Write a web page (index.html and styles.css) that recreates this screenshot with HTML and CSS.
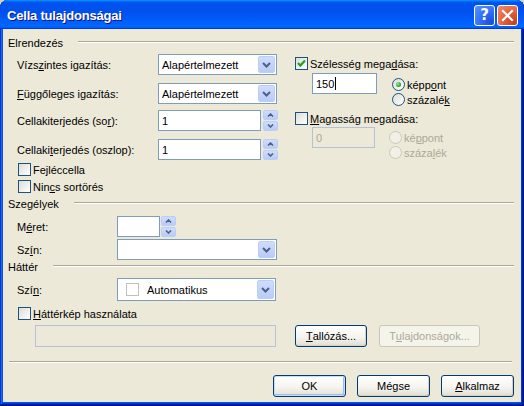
FILE: index.html
```html
<!DOCTYPE html>
<html lang="hu">
<head>
<meta charset="utf-8">
<title>Cella tulajdonságai</title>
<link rel="stylesheet" href="styles.css">
</head>
<body>
<div class="window">
  <div class="titlebar">
    <span class="title">Cella tulajdonságai</span>
    <div class="tbtns">
      <span class="tbtn help">?</span>
      <span class="tbtn close"><svg width="13" height="13" viewBox="0 0 13 13"><path d="M2 2 L11 11 M11 2 L2 11" stroke="#fff" stroke-width="2.2" stroke-linecap="square" fill="none"/></svg></span>
    </div>
  </div>
  <div class="client">
    <div class="ghead"><span>Elrendezés</span><i class="rule"></i></div>
    <div class="layout">
      <div class="col-left">
        <div class="frow">
          <span class="lbl">Vízs<u>z</u>intes igazítás:</span>
          <div class="combo w120"><span class="val">Alapértelmezett</span><span class="drop"><svg width="9" height="6" viewBox="0 0 9 6"><path d="M1 1 L4.5 4.5 L8 1" stroke="#4D6185" stroke-width="2" fill="none"/></svg></span></div>
        </div>
        <div class="frow mt8">
          <span class="lbl"><u>F</u>üggőleges igazítás:</span>
          <div class="combo w120"><span class="val">Alapértelmezett</span><span class="drop"><svg width="9" height="6" viewBox="0 0 9 6"><path d="M1 1 L4.5 4.5 L8 1" stroke="#4D6185" stroke-width="2" fill="none"/></svg></span></div>
        </div>
        <div class="frow mt6">
          <span class="lbl">Cellakiterjedés (so<u>r</u>):</span>
          <div class="edit w103">1</div>
          <div class="spin"><span class="sb"><svg width="7" height="4" viewBox="0 0 7 4"><path d="M1 3.5 L3.5 1 L6 3.5" stroke="#4D6185" stroke-width="1.6" fill="none"/></svg></span><span class="sb"><svg width="7" height="4" viewBox="0 0 7 4"><path d="M1 0.5 L3.5 3 L6 0.5" stroke="#4D6185" stroke-width="1.6" fill="none"/></svg></span></div>
        </div>
        <div class="frow mt8">
          <span class="lbl">Cellaki<u>t</u>erjedés (oszlop):</span>
          <div class="edit w103">1</div>
          <div class="spin"><span class="sb"><svg width="7" height="4" viewBox="0 0 7 4"><path d="M1 3.5 L3.5 1 L6 3.5" stroke="#4D6185" stroke-width="1.6" fill="none"/></svg></span><span class="sb"><svg width="7" height="4" viewBox="0 0 7 4"><path d="M1 0.5 L3.5 3 L6 0.5" stroke="#4D6185" stroke-width="1.6" fill="none"/></svg></span></div>
        </div>
        <div class="cbrow mt2 ind1"><span class="cb"></span><span class="cbl">Fe<u>j</u>léccella</span></div>
        <div class="cbrow mt2 ind1"><span class="cb"></span><span class="cbl">Nin<u>c</u>s sortörés</span></div>
      </div>
      <div class="col-right">
        <div class="cbrow mt2"><span class="cb checked"><svg width="11" height="11" viewBox="0 0 11 11"><path d="M2 5 L4.3 7.6 L9 2.6" stroke="#21A121" stroke-width="2.2" fill="none"/></svg></span><span class="cbl">Szélesség mega<u>d</u>ása:</span></div>
        <div class="subrow mt2">
          <div class="edit w65">150<span class="caret"></span></div>
          <div class="radios rg1">
            <div class="rrow"><span class="radio on"><span class="dot"></span></span><span class="rl">képp<u>o</u>nt</span></div>
            <div class="rrow"><span class="radio"></span><span class="rl">százalé<u>k</u></span></div>
          </div>
        </div>
        <div class="cbrow mt4"><span class="cb"></span><span class="cbl"><u>M</u>agasság megadása:</span></div>
        <div class="subrow mt1">
          <div class="edit w63 dis">0</div>
          <div class="radios rg2">
            <div class="rrow"><span class="radio dis"></span><span class="rl dis">ké<u>p</u>pont</span></div>
            <div class="rrow"><span class="radio dis"></span><span class="rl dis">száza<u>l</u>ék</span></div>
          </div>
        </div>
      </div>
    </div>

    <div class="ghead mt3"><span>Szegélyek</span><i class="rule"></i></div>
    <div class="section">
      <div class="frow mt5">
        <span class="lbl l100">M<u>é</u>ret:</span>
        <div class="edit w43"></div>
        <div class="spin ml1"><span class="sb"><svg width="7" height="4" viewBox="0 0 7 4"><path d="M1 3.5 L3.5 1 L6 3.5" stroke="#4D6185" stroke-width="1.6" fill="none"/></svg></span><span class="sb"><svg width="7" height="4" viewBox="0 0 7 4"><path d="M1 0.5 L3.5 3 L6 0.5" stroke="#4D6185" stroke-width="1.6" fill="none"/></svg></span></div>
      </div>
      <div class="frow mt2">
        <span class="lbl l100">Sz<u>í</u>n:</span>
        <div class="combo w160"><span class="val"></span><span class="drop"><svg width="9" height="6" viewBox="0 0 9 6"><path d="M1 1 L4.5 4.5 L8 1" stroke="#4D6185" stroke-width="2" fill="none"/></svg></span></div>
      </div>
    </div>

    <div class="ghead"><span>Háttér</span><i class="rule"></i></div>
    <div class="section">
      <div class="frow h23 mt4">
        <span class="lbl l100">Szí<u>n</u>:</span>
        <div class="combo w159 h23"><span class="swatch"></span><span class="val">Automatikus</span><span class="drop tall"><svg width="9" height="6" viewBox="0 0 9 6"><path d="M1 1 L4.5 4.5 L8 1" stroke="#4D6185" stroke-width="2" fill="none"/></svg></span></div>
      </div>
      <div class="cbrow mt5 ind1"><span class="cb"></span><span class="cbl"><u>H</u>áttérkép használata</span></div>
      <div class="pathrow mt4">
        <div class="edit dis path"></div>
        <span class="btn browse"><u>T</u>allózás...</span>
        <span class="btn disabled props">T<u>u</u>lajdonságok...</span>
      </div>
    </div>

    <div class="sep"></div>
    <div class="btnrow">
      <span class="btn default">OK</span>
      <span class="btn">Mégse</span>
      <span class="btn"><u>A</u>lkalmaz</span>
    </div>
  </div>
</div>
</body>
</html>
```
FILE: styles.css
```css
* { box-sizing: border-box; }
html, body { margin: 0; padding: 0; }
body {
  width: 524px;
  height: 406px;
  overflow: hidden;
  background: #d9d3bd;
  font-family: "Liberation Sans", Arial, sans-serif;
  font-size: 11px;
  color: #000;
}
u { text-decoration: underline; text-underline-offset: 1px; }

.window {
  width: 524px;
  height: 406px;
  display: flex;
  flex-direction: column;
  background: #0055e5;
  border-radius: 8px 8px 0 0;
  box-shadow: inset -1px -1px #00138c, inset 1px 1px #0831d9, inset -2px -2px #001ea0, inset 2px 2px #166aee, inset -3px -3px #003bda, inset 3px 3px #0855dd;
}

.titlebar {
  height: 29px;
  flex: none;
  display: flex;
  align-items: flex-start;
  justify-content: space-between;
  padding: 0 6px 0 7px;
  border-radius: 8px 8px 0 0;
  background: linear-gradient(180deg, #0997ff, #0053ee 8%, #0050ee 40%, #0066ff 88%, #0066ff 93%, #005bff 95%, #003dd7 96%, #003dd7);
}
.title {
  margin-top: 8px;
  color: #fff;
  font-weight: bold;
  font-size: 13px;
  letter-spacing: -0.2px;
  text-shadow: 1px 1px #0f1089;
}
.tbtns { display: flex; gap: 2px; margin-top: 5px; }
.tbtn {
  width: 21px;
  height: 21px;
  border: 1px solid #fff;
  border-radius: 3px;
  display: flex;
  align-items: center;
  justify-content: center;
}
.help {
  background: radial-gradient(circle at 85% 85%, #1a4fd8 0%, #2f6ef4 45%, #5a95ff 100%);
  color: #fff;
  font-family: "DejaVu Sans", sans-serif;
  font-weight: bold;
  font-size: 15px;
  line-height: 1;
}
.close {
  background: radial-gradient(circle at 85% 85%, #c2401f 0%, #e2643f 50%, #f08d6c 100%);
}

.client {
  flex: 1;
  margin: 0 3px 4px 3px;
  background: #ece9d8;
  display: flex;
  flex-direction: column;
}

.ghead {
  display: flex;
  align-items: center;
  height: 14px;
  padding: 0 7px 0 5px;
  flex: none;
}
.client > .ghead:first-child { margin-top: 7px; }
.rule {
  flex: 1;
  height: 2px;
  margin-left: 15px;
  margin-bottom: 3px;
  border-top: 1px solid #aca899;
  border-bottom: 1px solid #fff;
}

.layout {
  display: flex;
  gap: 18px;
  padding-left: 14px;
  margin-top: 4px;
  flex: none;
}
.col-left { width: 260px; display: flex; flex-direction: column; }
.col-right { display: flex; flex-direction: column; }
.section { padding-left: 14px; display: flex; flex-direction: column; flex: none; }

.frow { display: flex; align-items: center; height: 21px; flex: none; }
.frow.h23 { height: 23px; }
.lbl { width: 141px; flex: none; }
.lbl.l100 { width: 100px; }

.mt1 { margin-top: 1px; }
.mt2 { margin-top: 2px; }
.mt3 { margin-top: 3px; }
.mt4 { margin-top: 4px; }
.mt5 { margin-top: 5px; }
.mt6 { margin-top: 6px; }
.mt8 { margin-top: 8px; }
.ml1 { margin-left: 1px !important; }

.combo {
  height: 21px;
  display: flex;
  align-items: center;
  border: 1px solid #7f9db9;
  background: #fff;
  padding: 0 1px 0 3px;
}
.combo.h23 { height: 23px; padding-left: 8px; }
.w120 { width: 120px; }
.w160 { width: 160px; }
.w159 { width: 159px; }
.combo .val { flex: 1; white-space: nowrap; }
.drop {
  width: 17px;
  height: 17px;
  flex: none;
  display: flex;
  align-items: center;
  justify-content: center;
  border: 1px solid #bccdf7;
  border-radius: 2px;
  background: linear-gradient(180deg, #cfdcfc, #b9cbf8);
}
.drop.tall { height: 19px; }
.swatch {
  width: 13px;
  height: 13px;
  flex: none;
  border: 1px solid #c0c0c0;
  background: #fff;
  margin-right: 8px;
}

.edit {
  height: 21px;
  border: 1px solid #7f9db9;
  background: #fff;
  padding-left: 3px;
  display: flex;
  align-items: center;
  flex: none;
}
.edit.dis { border-color: #b3c2d4; background: #ece9d8; color: #aca899; }
.w103 { width: 103px; }
.w65 { width: 65px; }
.w63 { width: 63px; }
.w43 { width: 43px; }
.caret { display: inline-block; width: 1px; height: 13px; background: #000; margin-left: 1px; }

.spin {
  width: 15px;
  height: 21px;
  margin-left: 2px;
  display: flex;
  flex-direction: column;
  gap: 1px;
  flex: none;
}
.sb {
  flex: 1;
  display: flex;
  align-items: center;
  justify-content: center;
  border: 1px solid #bccdf7;
  border-radius: 2px;
  background: linear-gradient(180deg, #cfdcfc, #b9cbf8);
}

.cbrow { display: flex; align-items: center; height: 15px; flex: none; }
.ind1 { margin-left: 1px; }
.cb {
  width: 13px;
  height: 13px;
  flex: none;
  border: 1px solid #1c5180;
  background: linear-gradient(135deg, #dcdcd7, #ffffff);
  display: flex;
  align-items: center;
  justify-content: center;
}
.cbl { margin-left: 2px; white-space: nowrap; }

.subrow { display: flex; align-items: flex-start; padding-left: 17px; flex: none; }
.radios { display: flex; flex-direction: column; }
.rg1 { margin-left: 15px; margin-top: 4px; }
.rg2 { margin-left: 14px; margin-top: 3px; }
.rrow { display: flex; align-items: center; height: 15px; }
.radio {
  width: 13px;
  height: 13px;
  flex: none;
  border: 1px solid #1c5180;
  border-radius: 50%;
  background: linear-gradient(135deg, #dcdcd7, #ffffff);
  display: flex;
  align-items: center;
  justify-content: center;
}
.radio.dis { border-color: #cac8bb; background: #f2f0e6; }
.dot {
  width: 5px;
  height: 5px;
  border-radius: 50%;
  background: radial-gradient(circle at 35% 35%, #9be29b, #21a121 70%);
}
.rl { margin-left: 2px; white-space: nowrap; }
.rl.dis { color: #aca899; }

.pathrow { display: flex; align-items: center; height: 22px; flex: none; }
.path { width: 241px; height: 22px; margin-left: 18px; }

.btn {
  height: 22px;
  width: 73px;
  flex: none;
  display: flex;
  align-items: center;
  justify-content: center;
  border: 1px solid #003c74;
  border-radius: 3px;
  background: linear-gradient(180deg, #ffffff 0%, #f5f4ef 55%, #e6e3d8 90%, #d6d0c5 100%);
  box-shadow: inset -1px -1px 0 #d6d0c5;
  white-space: nowrap;
}
.btn.default { box-shadow: inset 0 0 0 1px #c8dcf9, inset -1px -1px 0 1px #9fbbe9; }
.btn.disabled {
  border-color: #c9c7ba;
  background: #f5f4ea;
  box-shadow: none;
  color: #aca899;
}
.browse { width: 72px; margin-left: 19px; }
.props { width: 101px; margin-left: 12px; }

.sep {
  height: 2px;
  margin: 14px 9px 0 6px;
  border-top: 1px solid #aca899;
  border-bottom: 1px solid #fff;
  flex: none;
}
.btnrow {
  display: flex;
  justify-content: flex-end;
  gap: 11px;
  padding-right: 7px;
  margin-top: 12px;
  flex: none;
}
```
